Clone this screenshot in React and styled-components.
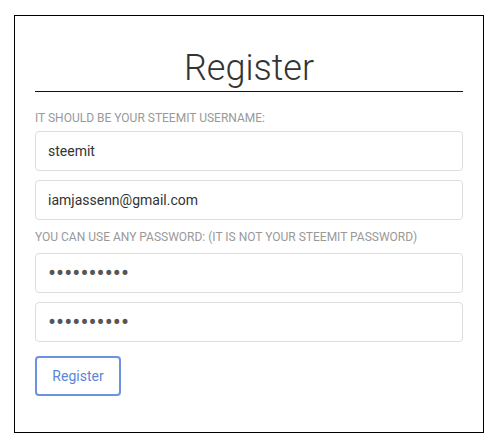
import React from "react";
import styled, { createGlobalStyle } from "styled-components";

const GlobalStyle = createGlobalStyle`
  body {
    margin: 0;
    background: #fff;
    font-family: Roboto, "Liberation Sans", sans-serif;
  }
`;

const Page = styled.div`
  padding: 15px 15px 12px 14px;
`;

const Card = styled.form`
  border: 1px solid #000;
  padding: 32px 20px 36px 20px;
  display: flex;
  flex-direction: column;
  align-items: stretch;
`;

const Title = styled.h1`
  margin: 0;
  padding-bottom: 3px;
  border-bottom: 1px solid #111;
  font-size: 36px;
  line-height: 40px;
  font-weight: 300;
  color: #333;
  text-align: center;
`;

const Hint = styled.label`
  display: block;
  margin-top: ${(p) => p.$top}px;
  margin-bottom: ${(p) => p.$bottom}px;
  font-size: 12px;
  line-height: 16px;
  color: #999;
  text-transform: uppercase;
`;

const Field = styled.input`
  box-sizing: border-box;
  height: 40px;
  margin-bottom: ${(p) => p.$gap}px;
  padding: 0 12px;
  border: 1px solid #ddd;
  border-radius: 4px;
  font-family: Roboto, "Liberation Sans", sans-serif;
  font-size: 14px;
  color: #333;
  background: #fff;
  outline: none;

  &[type="password"] {
    font-size: 24px;
    color: #555;
  }
`;

const Button = styled.button`
  align-self: flex-start;
  box-sizing: border-box;
  height: 40px;
  width: 86px;
  border: 2px solid #6a93e0;
  border-radius: 4px;
  background: #fff;
  color: #5b86d8;
  font-family: Roboto, "Liberation Sans", sans-serif;
  font-size: 14px;
  cursor: pointer;
`;

export default function App() {
  return (
    <Page>
      <GlobalStyle />
      <Card onSubmit={(e) => e.preventDefault()}>
        <Title>Register</Title>
        <Hint $top={18} $bottom={5}>It should be your steemit username:</Hint>
        <Field $gap={9} defaultValue="steemit" />
        <Field $gap={0} defaultValue="iamjassenn@gmail.com" />
        <Hint $top={9} $bottom={8}>You can use any password: (it is not your steemit password)</Hint>
        <Field $gap={9} type="password" defaultValue="steemitpwd" />
        <Field $gap={14} type="password" defaultValue="steemitpwd" />
        <Button type="submit">Register</Button>
      </Card>
    </Page>
  );
}
